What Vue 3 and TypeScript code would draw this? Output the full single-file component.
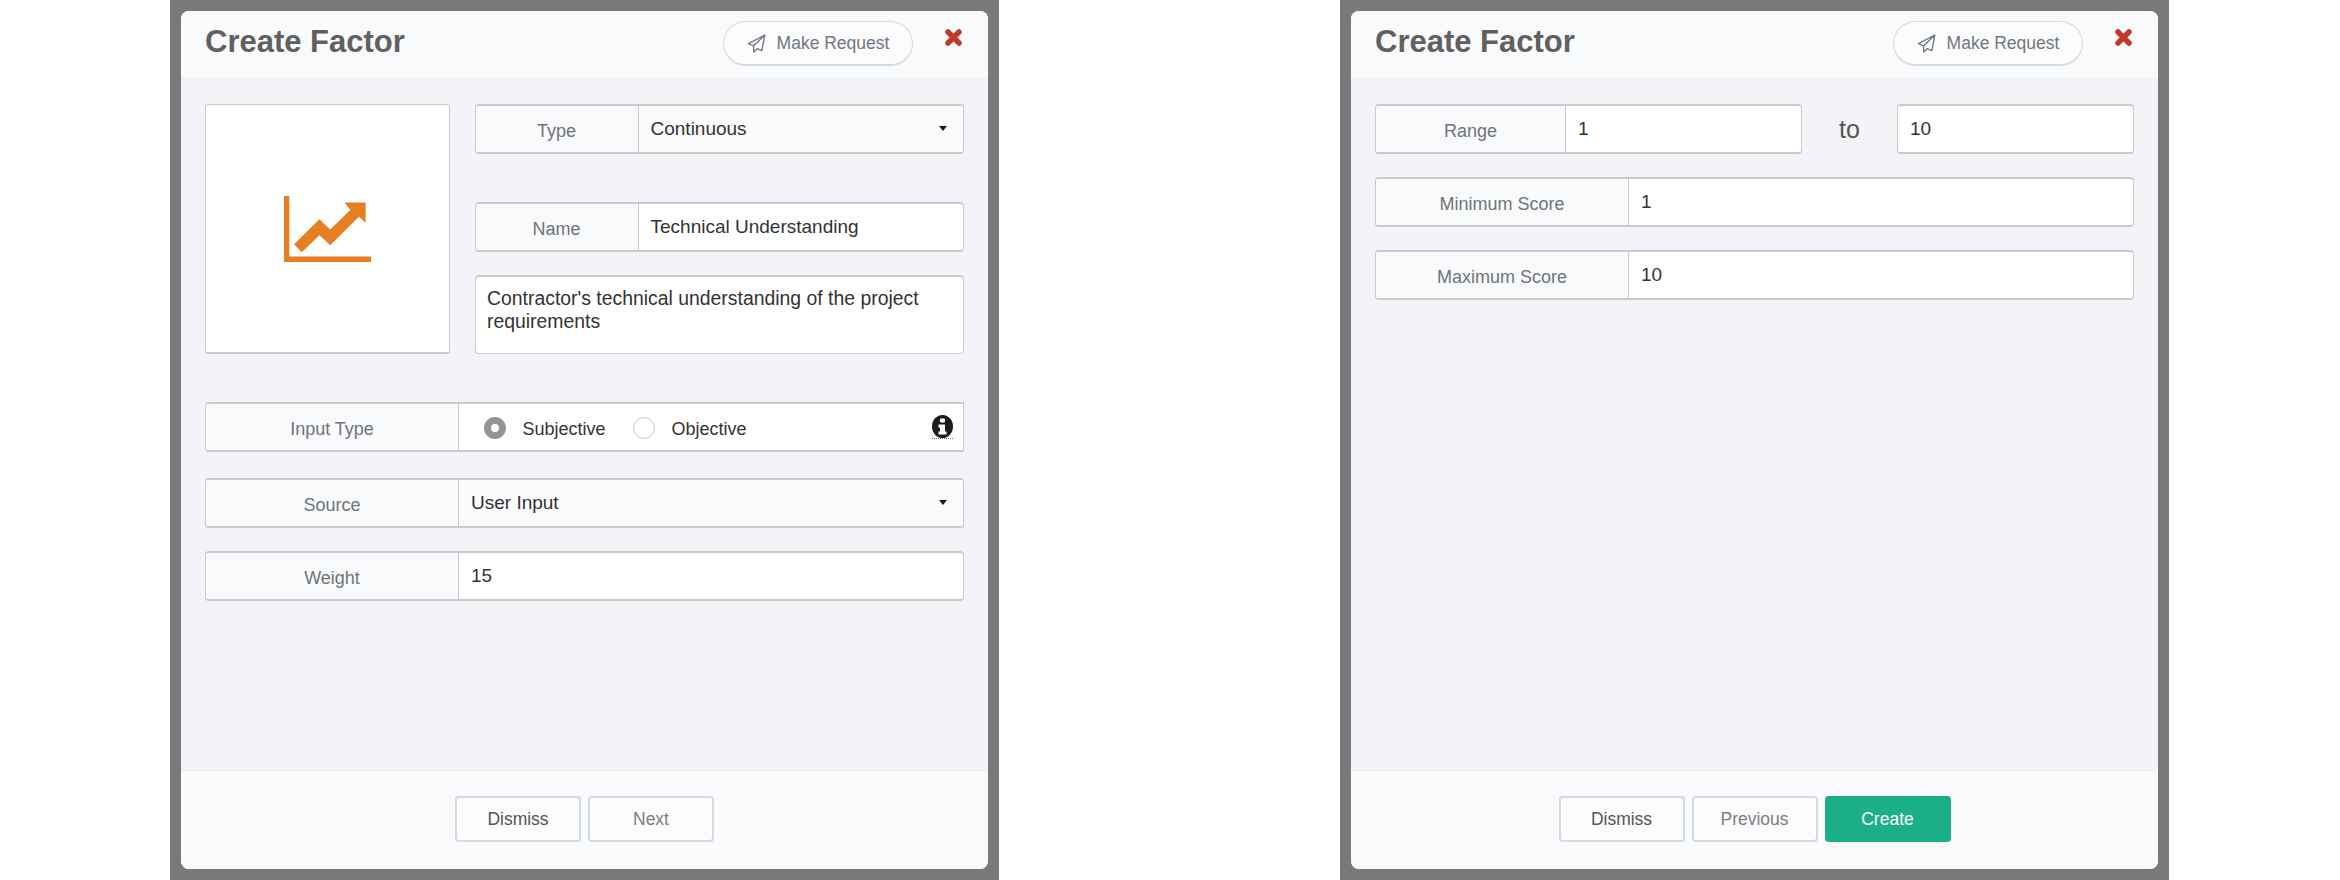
<script setup lang="ts">
const closeLabel = 'Make Request'
</script>

<template>
  <div class="page">
    <section class="backdrop">
      <div class="modal">
        <header class="head">
          <h1>Create Factor</h1>
          <button class="pill">
            <svg class="plane" viewBox="136 100 56 57" aria-hidden="true"><path d="M189 103 L140 129 L155 136 L156 154 L166 144 L180 150 Z M189 103 L155 136" /></svg>
            {{ closeLabel }}
          </button>
          <svg class="close" viewBox="0 0 17 17" aria-hidden="true"><path d="M3 3 L14 14 M14 3 L3 14" /></svg>
        </header>
        <main class="body">
          <div class="top">
            <div class="picture">
              <svg class="chart" viewBox="72 48 260 197" aria-hidden="true">
                <path d="M72 48 H88 V229 H332 V245 H72 Z" />
                <path d="M102 192 L178 117 L210 148 L270 90 L253 67 H316 V128 L296 110 L210 195 L178 165 L125 216 Z" />
              </svg>
            </div>
            <div class="top-fields">
              <div class="group"><div class="addon narrow">Type</div><div class="value select">Continuous<i class="caret"></i></div></div>
              <div class="group name-row"><div class="addon narrow">Name</div><div class="value">Technical Understanding</div></div>
              <div class="desc">Contractor's technical understanding of the project requirements</div>
            </div>
          </div>
          <div class="group input-type">
            <div class="addon wide">Input Type</div>
            <div class="value radios">
              <span class="radio on"></span><span class="r-label">Subjective</span>
              <span class="radio"></span><span class="r-label">Objective</span>
              <span class="info">
                <svg viewBox="0 0 21 23" aria-hidden="true"><ellipse cx="10.5" cy="11.5" rx="10.5" ry="11.5" fill="#1c1c1c" /><rect x="8" y="3.5" width="5" height="4" rx="1" fill="#fff" /><path d="M6.5 9.5 H13 V16.5 H14.5 V19.5 H6.5 V16.5 H8 V12.5 H6.5 Z" fill="#fff" /></svg>
              </span>
            </div>
          </div>
          <div class="group source"><div class="addon wide">Source</div><div class="value select">User Input<i class="caret"></i></div></div>
          <div class="group weight"><div class="addon wide">Weight</div><div class="value">15</div></div>
        </main>
        <footer class="foot">
          <button class="btn dark">Dismiss</button>
          <button class="btn">Next</button>
        </footer>
      </div>
    </section>

    <section class="backdrop">
      <div class="modal">
        <header class="head">
          <h1>Create Factor</h1>
          <button class="pill">
            <svg class="plane" viewBox="136 100 56 57" aria-hidden="true"><path d="M189 103 L140 129 L155 136 L156 154 L166 144 L180 150 Z M189 103 L155 136" /></svg>
            {{ closeLabel }}
          </button>
          <svg class="close" viewBox="0 0 17 17" aria-hidden="true"><path d="M3 3 L14 14 M14 3 L3 14" /></svg>
        </header>
        <main class="body">
          <div class="range">
            <div class="group range-left"><div class="addon range-add">Range</div><div class="value">1</div></div>
            <div class="to">to</div>
            <div class="group range-right"><div class="value solo">10</div></div>
          </div>
          <div class="group score"><div class="addon wide">Minimum Score</div><div class="value">1</div></div>
          <div class="group score"><div class="addon wide">Maximum Score</div><div class="value">10</div></div>
        </main>
        <footer class="foot">
          <button class="btn dark">Dismiss</button>
          <button class="btn">Previous</button>
          <button class="btn primary">Create</button>
        </footer>
      </div>
    </section>
  </div>
</template>

<style>
html, body { background: #fff; }
</style>

<style scoped>
.page {
  display: flex;
  gap: 341px;
  padding-left: 170px;
  width: 2340px;
  height: 880px;
  box-sizing: border-box;
  overflow: hidden;
  font-family: "Liberation Sans", Arial, sans-serif;
  font-size: 19px;
  color: #333;
}
.backdrop {
  width: 829px;
  height: 880px;
  box-sizing: border-box;
  padding: 11px;
  background: #78797b;
}
.modal {
  height: 858px;
  display: flex;
  flex-direction: column;
  background: #f3f4f8;
  border-radius: 8px;
  overflow: hidden;
}
.head {
  flex: none;
  height: 68px;
  box-sizing: border-box;
  display: flex;
  align-items: flex-start;
  padding: 10px 26px 0 24px;
  background: #f9fafc;
  border-bottom: 1px solid #eceef2;
}
h1 {
  margin: 0;
  flex: 1;
  font-size: 31px;
  line-height: 42px;
  font-weight: 700;
  color: #606060;
}
.pill {
  width: 190px;
  height: 45px;
  box-sizing: border-box;
  display: flex;
  align-items: center;
  justify-content: center;
  gap: 11px;
  background: #fcfcfd;
  border: 1px solid #d3dae3;
  border-bottom-width: 2px;
  border-radius: 23px;
  font: inherit;
  font-size: 17.5px;
  color: #6f7882;
}
.plane { width: 19px; height: 19px; }
.plane path { fill: none; stroke: #6f7882; stroke-width: 4; stroke-linejoin: round; }
.close { width: 17px; height: 17px; margin: 8px 0 0 32px; }
.close path { fill: none; stroke: #c0392b; stroke-width: 5.5; stroke-linecap: round; }
.body {
  flex: 1;
  display: flex;
  flex-direction: column;
  padding: 25px 24.5px 0 24px;
}
.top { display: flex; gap: 24.5px; }
.picture {
  width: 245px;
  height: 250px;
  box-sizing: border-box;
  display: flex;
  align-items: center;
  justify-content: center;
  background: #fff;
  border: 1px solid #c9cacc;
  border-bottom-width: 2px;
  border-radius: 3px;
}
.chart { width: 87px; height: 66px; }
.chart path { fill: #e67e22; }
.top-fields { flex: 1; display: flex; flex-direction: column; }
.group {
  height: 50px;
  flex: none;
  box-sizing: border-box;
  display: flex;
  background: #fff;
  border: 1px solid #c9cacc;
  border-top-width: 2px;
  border-bottom-width: 2px;
  border-radius: 4px;
  overflow: hidden;
}
.addon {
  flex: none;
  box-sizing: border-box;
  display: flex;
  align-items: center;
  justify-content: center;
  padding-top: 4px;
  background: #f9fafc;
  border-right: 1px solid #c9cacc;
  font-size: 18px;
  color: #6e747b;
}
.narrow { width: 163px; }
.wide { width: 253px; }
.range-add { width: 190px; }
.value {
  flex: 1;
  display: flex;
  align-items: center;
  padding: 0 0 0 12px;
  color: #333;
}
.solo { padding-left: 12px; }
.select { background: #fbfbfb; position: relative; }
.caret {
  position: absolute;
  right: 16px;
  top: 20px;
  border-left: 4.5px solid transparent;
  border-right: 4.5px solid transparent;
  border-top: 5px solid #1c1c1c;
}
.name-row { margin-top: 48px; }
.desc {
  height: 79px;
  margin-top: 23px;
  box-sizing: border-box;
  padding: 10px 12px 0 11.5px;
  background: #fff;
  border: 1px solid #c9cacc;
  border-top-width: 2px;
  border-radius: 4px;
  font-size: 19.4px;
  line-height: 23px;
}
.input-type { margin-top: 48px; border-radius: 4px 0 0 4px; }
.source { margin-top: 26px; }
.weight { margin-top: 23px; }
.radios { padding: 2px 10px 0 24.5px; position: relative; font-size: 18px; }
.radio {
  width: 22px;
  height: 22px;
  box-sizing: border-box;
  flex: none;
  border: 1px solid #c5c6c8;
  border-radius: 50%;
  background: #fff;
}
.radio.on {
  border: 7.5px solid #929396;
  background: #fff;
}
.r-label { margin: 2px 27px 0 17px; }
.info {
  margin-left: auto;
  width: 21px;
  height: 24px;
  box-sizing: border-box;
  border-bottom: 1px dotted #777;
  margin-top: -3px;
}
.info svg { display: block; width: 21px; height: 23px; }
.range { display: flex; align-items: center; }
.range-left { width: 427px; }
.to {
  width: 95.5px;
  text-align: center;
  font-size: 25px;
  color: #555;
}
.range-right { width: 236.5px; }
.score { margin-top: 23px; }
.foot {
  flex: none;
  height: 99px;
  box-sizing: border-box;
  display: flex;
  justify-content: center;
  gap: 7px;
  padding-top: 25px;
  background: #f9fafc;
  border-top: 1px solid #eceef2;
}
.btn {
  width: 126px;
  height: 46px;
  box-sizing: border-box;
  background: #fcfcfd;
  border: 2px solid #d3dae3;
  border-radius: 4px;
  font: inherit;
  font-size: 17.5px;
  color: #7a7f86;
}
.btn.dark { color: #555; }
.btn.primary { background: #1aaf87; border-color: #1aaf87; color: #fff; }
</style>
